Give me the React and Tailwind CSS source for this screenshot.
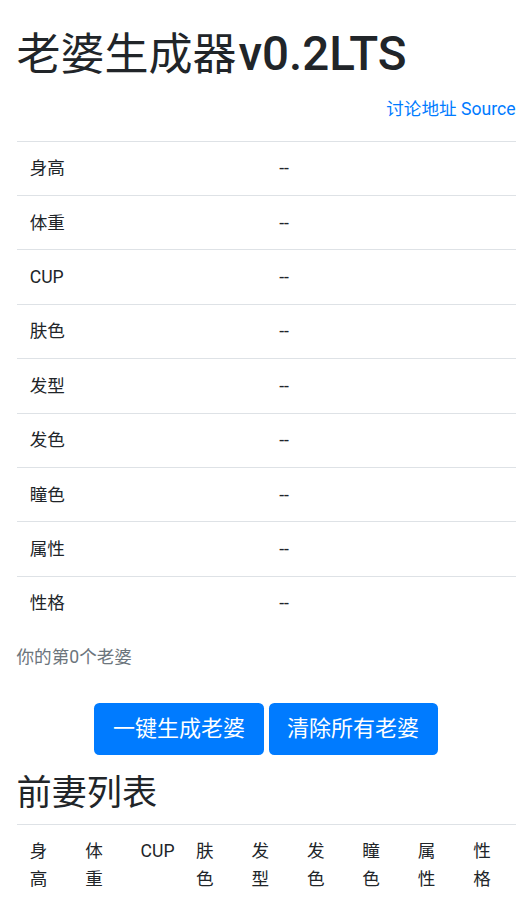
import React from 'react';

const fields = ['身高', '体重', 'CUP', '肤色', '发型', '发色', '瞳色', '属性', '性格'];

const App = () => {
  return (
    <div className="min-h-[920px] bg-white px-[16.5px] pt-[29px] text-[#212529] font-['Roboto','Noto_Sans_CJK_SC',sans-serif] text-[17.6px]">
      <h1 className="h-[52.8px] text-[44px] leading-[52.8px]">
        <span className="font-normal">老婆生成器</span>
        <span className="ml-[2px] text-[47.5px] leading-[40px] font-medium">v0.2LTS</span>
      </h1>
      <div className="mt-[14px] flex justify-end leading-[26.4px]">
        <a className="text-[#007bff]">讨论地址 Source</a>
      </div>

      <div className="mt-[18.5px]">
        {fields.map((f) => (
          <div key={f} className="grid grid-cols-2 h-[54.4px] items-center border-t border-[#dee2e6] leading-[26.4px]">
            <div className="px-[13.2px]">{f}</div>
            <div className="px-[13.2px]">--</div>
          </div>
        ))}
      </div>

      <p className="mt-[13.5px] leading-[26.4px] text-[#6c757d]">你的第0个老婆</p>

      <div className="mt-[32.5px] flex justify-center gap-[5px]">
        <button className="h-[52.6px] rounded-[5.3px] bg-[#007bff] px-[18.5px] text-[22px] leading-[33px] text-white">
          一键生成老婆
        </button>
        <button className="h-[52.6px] rounded-[5.3px] bg-[#007bff] px-[18.5px] text-[22px] leading-[33px] text-white">
          清除所有老婆
        </button>
      </div>

      <h2 className="mt-[17.2px] text-[35.2px] leading-[42.2px] font-normal">前妻列表</h2>

      <div className="mt-[9.3px] grid grid-cols-9 border-t border-[#dee2e6]">
        {fields.map((f) => (
          <div key={f} className="px-[13.2px] pt-[13.2px] leading-[27.4px] break-all">
            {f === 'CUP' ? <span className="whitespace-nowrap">CUP</span> : f}
          </div>
        ))}
      </div>
    </div>
  );
};

export default App;
